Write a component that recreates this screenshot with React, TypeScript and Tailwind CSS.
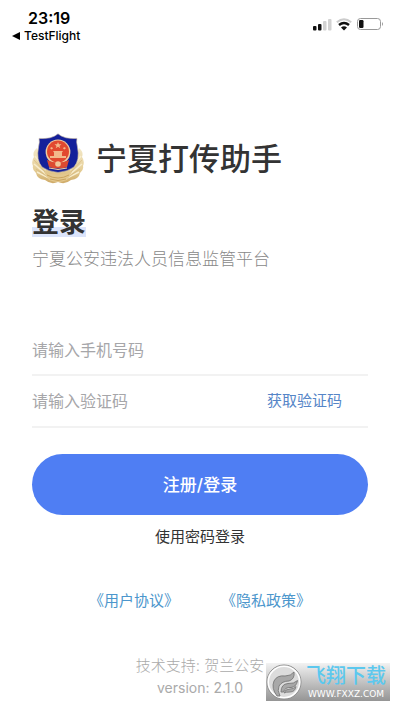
function StatusBar() {
  return (
    <header className="flex h-12 items-start justify-between pt-2 pr-4 pl-3 text-black">
      <div>
        <div className="pl-4 text-base leading-5 font-semibold">23:19</div>
        <button type="button" className="flex items-center gap-1 text-xs leading-4 font-medium">
          <svg className="h-2 w-2" viewBox="0 0 8 8" aria-hidden="true">
            <path d="M0 4 8 0v8z" fill="currentColor" />
          </svg>
          TestFlight
        </button>
      </div>
      <div className="flex items-center gap-1 pt-2" aria-hidden="true">
        <svg className="h-4 w-5" viewBox="0 0 20 16">
          <rect x="1" y="10" width="3.5" height="4.5" rx="1" fill="#111" />
          <rect x="6" y="8" width="3.5" height="6.5" rx="1" fill="#111" />
          <rect x="11" y="5" width="3.5" height="9.5" rx="1" fill="#d2d2d2" />
          <rect x="16" y="3" width="3.5" height="11.5" rx="1" fill="#d2d2d2" />
        </svg>
        <svg className="h-4 w-4" viewBox="0 0 16 16" fill="none">
          <path d="M.8 6.2Q8 .2 15.2 6.2" stroke="#ccc" strokeWidth="2" />
          <path d="M3 9Q8 4.8 13 9" stroke="#111" strokeWidth="2.4" />
          <path d="M5 11.6Q8 9 11 11.6L8 14.6z" fill="#111" />
        </svg>
        <svg className="h-4 w-7" viewBox="0 0 28 16">
          <rect x="1.5" y="2.5" width="23" height="11" rx="3" fill="none" stroke="#999" />
          <rect x="3" y="4" width="4.5" height="8" rx="1.2" fill="#111" />
          <path d="M26 6q2 2 0 4z" fill="#999" />
        </svg>
      </div>
    </header>
  );
}

function Emblem() {
  return (
    <svg className="h-[52px] w-[52px] shrink-0" viewBox="0 0 52 52" role="img" aria-label="警徽">
      <defs>
        <linearGradient id="gold" x1="0" y1="0" x2="0" y2="1">
          <stop offset="0" stopColor="#f3e8c8" />
          <stop offset=".6" stopColor="#e6cf98" />
          <stop offset="1" stopColor="#cfab68" />
        </linearGradient>
      </defs>
      <path d="M5 15Q0 19 2 24Q-1 28 1 33Q0 37 4 40Q5 46 13 47Q19 52 26 49Q33 52 39 47Q47 46 48 40Q52 37 51 33Q53 28 50 24Q52 19 47 15L41 30H11Z" fill="url(#gold)" />
      <path d="M3 23 14 37M2 31 15 42M5 39 19 46M49 23 38 37M50 31 37 42M47 39 33 46" stroke="#f8edcd" strokeWidth="1.6" fill="none" />
      <path d="M2 27 13 39M4 36 17 45M50 27 39 39M48 36 35 45" stroke="#d4b67c" strokeWidth=".6" fill="none" />
      <path d="M26 .8Q29 3.5 34 4.8Q40 6 45 5.4Q44 9 45.5 14Q48 27 42 34Q36 38.5 26 39.5Q16 38.5 10 34Q4 27 6.5 14Q8 9 7 5.4Q12 6 18 4.8Q23 3.5 26 .8Z" fill="#14209a" stroke="#cfc0a8" strokeWidth=".6" />
      <circle cx="26" cy="19" r="12.4" fill="#f0cda0" />
      <circle cx="26" cy="18.5" r="11" fill="#e2492f" />
      <path d="m26 9 1 2.3h2.5l-2 1.6.8 2.4-2.3-1.5-2.3 1.5.8-2.4-2-1.6H25zM20 14l1 1.5-1.5 1L18 15zM32 14l2 1-1.5 1.5-1.5-1zM21 18h10l-1.2 1.8H30V23h4v2H18v-2h4v-3.2h.2z" fill="#f3b98a" />
      <path d="M15 27Q26 32 37 27L35 34Q26 37 17 34Z" fill="#dc4a30" />
      <circle cx="26" cy="31" r="2.8" fill="#f1c798" />
      <path d="M17 35Q26 38 35 35" fill="none" stroke="#f0cda0" />
      <path d="M12 39Q26 44 40 39L35 47Q26 51 17 47Z" fill="#e3c88e" />
      <path d="M15 42Q26 48 37 42M18 46Q26 49 34 46" fill="none" stroke="#c79f58" strokeWidth=".9" />
    </svg>
  );
}

function Watermark() {
  return (
    <div className="absolute right-2.5 bottom-2.5 flex h-[38px] w-[124px] items-center bg-linear-to-b from-[#f2f2f2] to-[#959595] text-white">
      <svg className="h-9 w-9 shrink-0" viewBox="0 0 36 36" aria-hidden="true">
        <circle cx="18" cy="18" r="17" fill="#b5b5b5" stroke="#8d8d8d" strokeWidth="1" />
        <circle cx="18" cy="18" r="15.8" fill="#dcdcdc" stroke="#fff" strokeWidth="1.6" />
        <path d="M11 32Q5 24 8 17Q11 11 19 12Q25 12 28 8Q29 15 23 17Q16 17 13 22Q11 26 14 32Z" fill="#a8a8a8" stroke="#777" strokeWidth=".9" />
        <path d="M15 28Q15 20 22 19.5Q28 20 31.5 16.5Q30.500 23 25 23.500Q19 23 17.500 28Z" fill="#a8a8a8" stroke="#777" strokeWidth=".9" />
        <path d="M18 29Q19 25 24 25Q28 25 30 22.500Q29 28 24 28Q20 28 18 29Z" fill="#a8a8a8" stroke="#777" strokeWidth=".8" />
      </svg>
      <div className="flex flex-1 flex-col items-center whitespace-nowrap">
        <span className="text-xl leading-6 font-medium text-[#5cc8ee]">飞翔下载</span>
        <span className="font-['DejaVu_Sans',sans-serif] text-[9px] leading-3">WWW.FXXZ.COM</span>
      </div>
    </div>
  );
}

export default function App() {
  return (
    <div className="relative min-h-screen bg-white font-['Inter','Noto_Sans_CJK_SC',sans-serif] text-[#333333]">
      <StatusBar />
      <main className="px-8 pt-[85px]">
        <div className="flex items-center gap-3">
          <Emblem />
          <h1 className="text-[31px] leading-[52px] font-medium whitespace-nowrap">宁夏打传助手</h1>
        </div>
        <h2 className="mt-6 w-fit bg-linear-to-t from-[#dbe4fb] from-35% to-transparent to-35% text-[27px] leading-7 font-bold">登录</h2>
        <p className="mt-2 text-[17px] leading-7 font-light text-[#888888]">宁夏公安违法人员信息监管平台</p>

        <form className="mt-[50px]" onSubmit={(e) => e.preventDefault()}>
          <div className="flex h-[53px] items-center border-b-2 border-[#f2f2f2] pt-0.5">
            <input
              type="tel"
              aria-label="手机号码"
              placeholder="请输入手机号码"
              className="w-full min-w-0 bg-transparent text-base leading-6 outline-none placeholder:text-[#a6a6a9]"
            />
          </div>
          <div className="flex h-[52px] items-center border-b-2 border-[#f2f2f2]">
            <input
              type="text"
              aria-label="验证码"
              placeholder="请输入验证码"
              className="min-w-0 flex-1 bg-transparent text-base leading-6 outline-none placeholder:text-[#a6a6a9]"
            />
            <button type="button" className="pr-[26px] text-[15px] leading-6 text-[#5585c7]">获取验证码</button>
          </div>
          <button type="submit" className="mt-[26px] h-[61px] w-full rounded-full bg-[#4f7ef3] pt-0.5 text-[17px] font-medium text-white">
            注册/登录
          </button>
        </form>

        <div className="mt-2 text-center">
          <button type="button" className="text-[15px] leading-7">使用密码登录</button>
        </div>
        <nav className="mt-9 flex justify-center gap-[42px] text-[15px] leading-7 text-[#4c96cc]">
          <a href="#agreement">《用户协议》</a>
          <a href="#privacy">《隐私政策》</a>
        </nav>
      </main>
      <footer className="mt-[39px] text-center leading-6 text-[#aaaaaa]">
        <p className="text-[15px] font-light">技术支持: 贺兰公安</p>
        <p className="text-sm">version: 2.1.0</p>
      </footer>
      <Watermark />
    </div>
  );
}
